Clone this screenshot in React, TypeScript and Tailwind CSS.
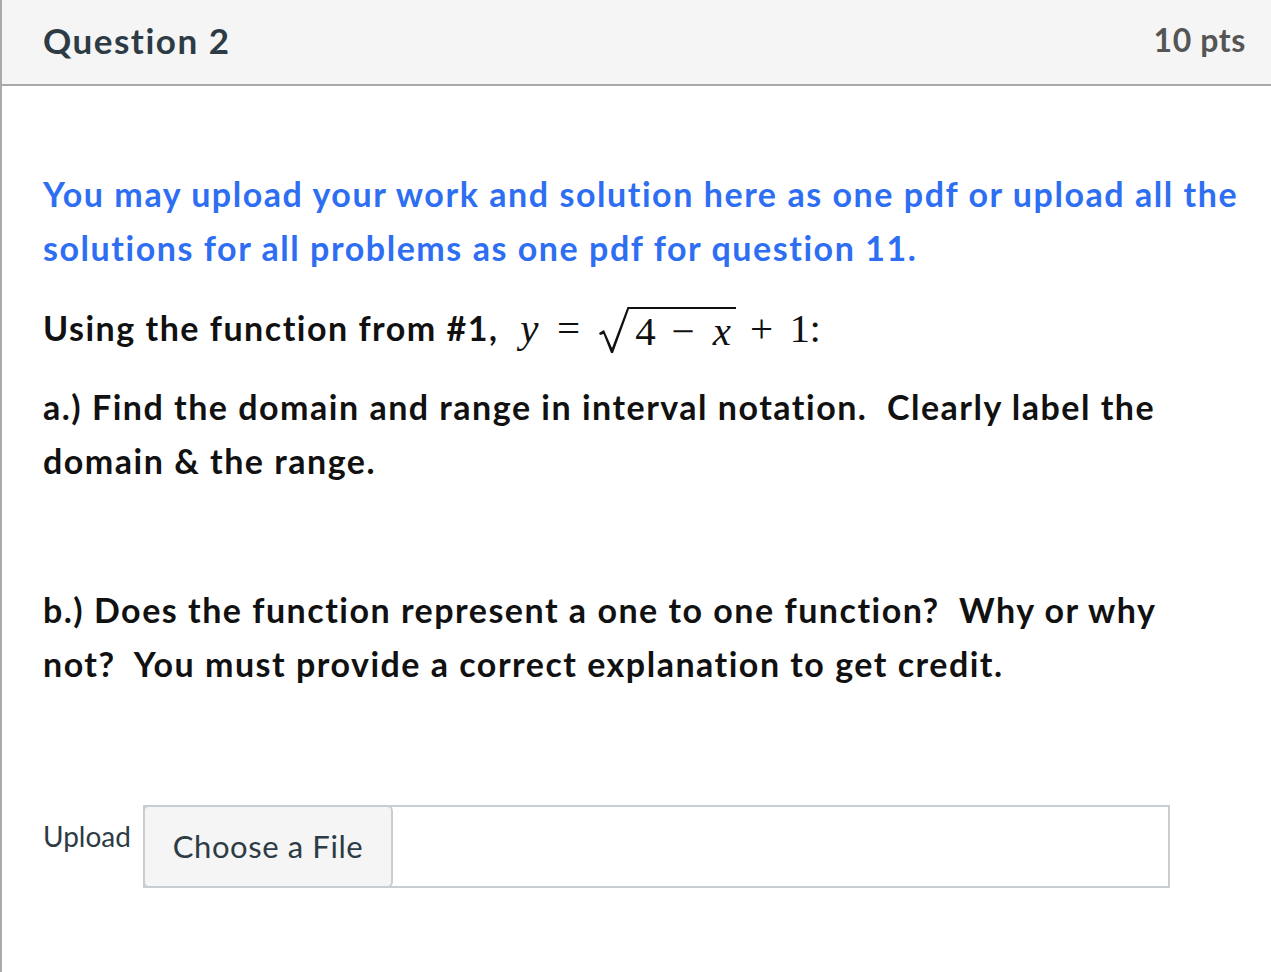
import React from "react";

export default function App() {
  const lato = { fontFamily: "Lato, 'Noto Sans', sans-serif" } as React.CSSProperties;
  const serif = { fontFamily: "'Liberation Serif', 'DejaVu Serif', serif" } as React.CSSProperties;
  return (
    <div className="w-full min-h-[972px] bg-white border-l-2 border-[#aaaaaa]" style={lato}>
      <div className="h-[86px] bg-[#f5f5f5] border-b-2 border-[#aaaaaa] flex items-center justify-between pl-[41px] pr-[25px]">
        <span className="text-[35px] font-bold text-[#2d3b45] tracking-[1.5px] -mt-[4px]">Question 2</span>
        <span className="text-[32px] font-bold text-[#555555] tracking-[0.6px] -mt-[4px]">10 pts</span>
      </div>
      <div className="pl-[41px] pr-[20px] pt-[81px] font-bold text-[34px] leading-[54px] tracking-[1.5px] text-[#111111]">
        <p className="text-[#2e6ef2] whitespace-nowrap tracking-[1.55px]">
          You may upload your work and solution here as one pdf or upload all the
          <br />
          solutions for all problems as one pdf for question 11.
        </p>
        <p className="mt-[26px] flex items-center whitespace-nowrap">
          <span>Using the function from #1,</span>
          <span className="flex items-center font-normal text-[41px] tracking-normal ml-[19px]" style={serif}>
            <span className="italic w-[24px] text-center">y</span>
            <span className="ml-[14px] w-[26px] text-center">=</span>
            <span className="ml-[17px] flex items-start h-[50px]">
              <svg width="31" height="50" viewBox="0 0 31 50">
                <path d="M1 30 L6 27 L14 45 L29.5 4 L31 4 L31 6 L15 50 L13 50 L5.5 31 L2 32 Z" fill="#111" />
              </svg>
              <span className="border-t-2 border-[#111] mt-[4px] w-[107px] h-[46px] flex items-center leading-none">
                <span className="ml-[5px] w-[22px] text-center">4</span>
                <span className="ml-[13px] w-[27px] text-center">−</span>
                <span className="ml-[13px] w-[25px] text-center italic">x</span>
              </span>
            </span>
            <span className="ml-[10px] w-[30px] text-center">+</span>
            <span className="ml-[13px] w-[17px] text-center">1</span>
            <span className="ml-[3px]">:</span>
          </span>
        </p>
        <p className="mt-[25px] whitespace-nowrap">
          a.) Find the domain and range in interval notation.&nbsp; Clearly label the
          <br />
          domain &amp; the range.
        </p>
        <p className="mt-[95px] whitespace-nowrap">
          b.) Does the function represent a one to one function?&nbsp; Why or why
          <br />
          not?&nbsp; You must provide a correct explanation to get credit.
        </p>
      </div>
      <div className="mt-[114px] pl-[41px] flex items-start">
        <span className="text-[28px] text-[#2d3b45] mt-[10px] w-[100px]">Upload</span>
        <div className="w-[1027px] h-[83px] border-2 border-[#c7cdd1] flex">
          <div className="w-[250px] -ml-[2px] -mt-[2px] bg-[#f5f5f5] border-2 border-[#c7cdd1] rounded-[6px] flex items-center justify-center text-[31px] tracking-[0.6px] text-[#2d3b45]" style={{ height: 83 }}>
            Choose a File
          </div>
        </div>
      </div>
    </div>
  );
}
